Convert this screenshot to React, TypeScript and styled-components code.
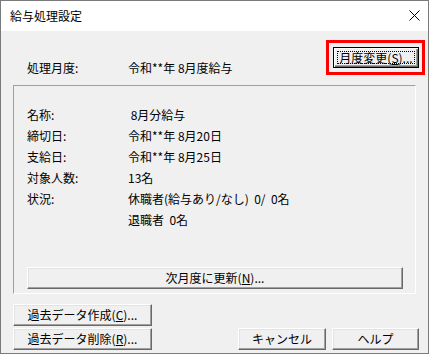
import { createGlobalStyle, styled } from "styled-components";

const GlobalStyle = createGlobalStyle`
    html, body {
        margin: 0;
        padding: 0;
        background: #ffffff;
    }
    body {
        font-family: "Noto Sans CJK JP", "Noto Sans", sans-serif;
        font-size: 12px;
        color: #000;
    }
`;

const Window = styled.div`
    width: 429px;
    height: 354px;
    box-sizing: border-box;
    border: 1px solid #7a7a7a;
    background: #f0f0f0;
    display: flex;
    flex-direction: column;
`;

const TitleBar = styled.div`
    height: 30px;
    background: #ffffff;
    display: flex;
    align-items: center;
    justify-content: space-between;
    padding: 0 8px 0 9px;
    font-size: 12px;
    line-height: 14px;
`;

const CloseIcon = styled.svg`
    width: 11px;
    height: 11px;
    margin-top: -1px;
`;

const TopRow = styled.div`
    display: flex;
    align-items: flex-end;
    justify-content: space-between;
    padding: 9px 3px 0 26px;
    margin-bottom: 10px;
`;

const Field = styled.div`
    display: flex;
    line-height: 16px;
    margin-bottom: -1px;
`;

const Label = styled.span`
    width: 101px;
    flex: none;
`;

const Value = styled.span`
    white-space: pre;
`;

const Highlight = styled.div`
    border: 3px solid #ff0000;
    padding: 4px 3px 4px 4px;
`;

const Button = styled.button<{ $w?: number; $h?: number }>`
    width: ${(p) => (p.$w ? `${p.$w}px` : "100%")};
    height: ${(p) => p.$h ?? 22}px;
    box-sizing: border-box;
    margin: 0;
    padding: 0;
    font-family: inherit;
    font-size: 12px;
    line-height: 14px;
    color: #000;
    background: #f0f0f0;
    border: 1px solid;
    border-color: #ffffff #696969 #696969 #ffffff;
    box-shadow: inset -1px -1px 0 #a0a0a0, inset 1px 1px 0 #e3e3e3;
    display: flex;
    align-items: center;
    justify-content: center;
    white-space: pre;
`;

const DefaultButton = styled(Button)`
    border: 1px solid #000;
    box-shadow: inset 1px 1px 0 #ffffff, inset -1px -1px 0 #696969, inset -2px -2px 0 #a0a0a0;
`;

const FocusRect = styled.span`
    box-sizing: border-box;
    width: calc(100% - 6px);
    height: calc(100% - 6px);
    border: 1px dotted #000;
    display: flex;
    align-items: center;
    justify-content: center;
    line-height: 13px;
`;

const Key = styled.span`
    text-decoration: underline;
    text-underline-offset: 1px;
`;

const Panel = styled.div`
    margin: 0 12px;
    height: 209px;
    box-sizing: border-box;
    border: 1px solid;
    border-color: #a0a0a0 #ffffff #ffffff #a0a0a0;
    padding: 18px 12px 4px 13px;
    display: flex;
    flex-direction: column;
`;

const InfoList = styled.div`
    display: flex;
    flex-direction: column;
`;

const InfoRow = styled.div`
    display: flex;
    line-height: 21px;
`;

const PanelFooter = styled.div`
    margin-top: auto;
`;

const BottomArea = styled.div`
    display: flex;
    justify-content: space-between;
    align-items: flex-end;
    padding: 10px 9px 3px 12px;
`;

const ButtonStack = styled.div`
    display: flex;
    flex-direction: column;
    gap: 2px;
`;

const ButtonRow = styled.div`
    display: flex;
    gap: 6px;
`;

const rows: { label: string; value: string }[] = [
    { label: "名称:", value: " 8月分給与" },
    { label: "締切日:", value: "令和**年 8月20日" },
    { label: "支給日:", value: "令和**年 8月25日" },
    { label: "対象人数:", value: "13名" },
    { label: "状況:", value: "休職者(給与あり/なし)  0/  0名" },
    { label: "", value: "退職者  0名" },
];

export default function App() {
    return (
        <>
            <GlobalStyle />
            <Window>
                <TitleBar>
                    <span>給与処理設定</span>
                    <CloseIcon viewBox="0 0 11 11">
                        <path d="M0.5 0.5 L10.5 10.5 M10.5 0.5 L0.5 10.5" stroke="#000" strokeWidth="1" fill="none" />
                    </CloseIcon>
                </TitleBar>

                <TopRow>
                    <Field>
                        <Label>処理月度:</Label>
                        <Value>令和**年 8月度給与</Value>
                    </Field>
                    <Highlight>
                        <DefaultButton $w={86} $h={21}>
                            <FocusRect>
                                月度変更(<Key>S</Key>)...
                            </FocusRect>
                        </DefaultButton>
                    </Highlight>
                </TopRow>

                <Panel>
                    <InfoList>
                        {rows.map((r, i) => (
                            <InfoRow key={i}>
                                <Label>{r.label}</Label>
                                <Value>{r.value}</Value>
                            </InfoRow>
                        ))}
                    </InfoList>
                    <PanelFooter>
                        <Button $h={22}>
                            次月度に更新(<Key>N</Key>)...
                        </Button>
                    </PanelFooter>
                </Panel>

                <BottomArea>
                    <ButtonStack>
                        <Button $w={139} $h={22}>
                            過去データ作成(<Key>C</Key>)...
                        </Button>
                        <Button $w={139} $h={22}>
                            過去データ削除(<Key>R</Key>)...
                        </Button>
                    </ButtonStack>
                    <ButtonRow>
                        <Button $w={88} $h={22}>キャンセル</Button>
                        <Button $w={87} $h={22}>ヘルプ</Button>
                    </ButtonRow>
                </BottomArea>
            </Window>
        </>
    );
}
